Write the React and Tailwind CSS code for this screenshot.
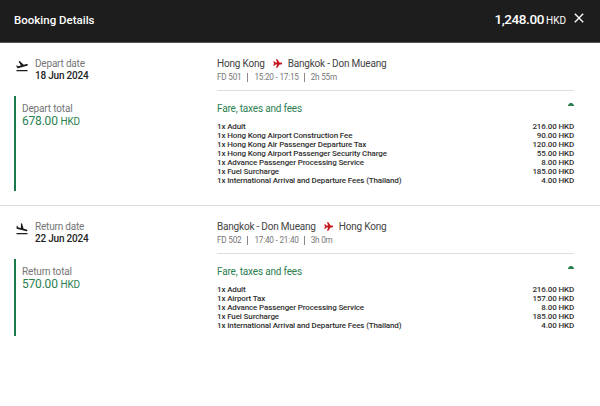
import React from 'react'
import { MdClose, MdFlightLand, MdFlightTakeoff } from 'react-icons/md'

const FLIGHTS = [
  {
    key: 'depart',
    label: 'Depart',
    Icon: MdFlightTakeoff,
    date: '18 Jun 2024',
    total: '678.00',
    from: 'Hong Kong',
    to: 'Bangkok - Don Mueang',
    number: 'FD 501',
    time: '15:20 - 17:15',
    duration: '2h 55m',
    fees: [
      ['Adult', '216.00'],
      ['Hong Kong Airport Construction Fee', '90.00'],
      ['Hong Kong Air Passenger Departure Tax', '120.00'],
      ['Hong Kong Airport Passenger Security Charge', '55.00'],
      ['Advance Passenger Processing Service', '8.00'],
      ['Fuel Surcharge', '185.00'],
      ['International Arrival and Departure Fees (Thailand)', '4.00'],
    ],
  },
  {
    key: 'return',
    label: 'Return',
    Icon: MdFlightLand,
    date: '22 Jun 2024',
    total: '570.00',
    from: 'Bangkok - Don Mueang',
    to: 'Hong Kong',
    number: 'FD 502',
    time: '17:40 - 21:40',
    duration: '3h 0m',
    fees: [
      ['Adult', '216.00'],
      ['Airport Tax', '157.00'],
      ['Advance Passenger Processing Service', '8.00'],
      ['Fuel Surcharge', '185.00'],
      ['International Arrival and Departure Fees (Thailand)', '4.00'],
    ],
  },
]

function PlaneIcon() {
  return (
    <svg className="ml-[8px] mr-[6px] mb-[2px] h-[9px] w-[9px] text-[#c4161c]" viewBox="0 0 18 18" fill="currentColor">
      <path d="M0.5 4.5h2L5 7h3.4L5.8 0.5h3L13 7h3.2a2 2 0 0 1 0 4H13l-4.2 6.5h-3L8.4 11H5l-2.5 2.5h-2L2 9z" />
    </svg>
  )
}

function Flight({ flight }) {
  const { Icon } = flight
  return (
    <section className="border-b border-[#dcdcdc] last:border-b-0 pl-[14px] pr-[26px] pt-[15px] pb-[14px]">
      <div className="flex h-[38px]">
        <div className="flex w-[203px] text-[10px] leading-3 tracking-[-0.2px]">
          <Icon className="mt-[0.5px] ml-[1px] mr-[6px] size-[14px] text-[#1c1c1c]" />
          <div>
            <div className="text-[#757575]">{flight.label} date</div>
            <div className="font-medium text-[#242424]">{flight.date}</div>
          </div>
        </div>

        <div className="h-[33px] flex-1 border-b border-[#dedede]">
          <div className="flex h-3 items-center text-[10px] leading-3 tracking-[-0.2px] text-[#444]">
            <span>{flight.from}</span>
            <PlaneIcon />
            <span>{flight.to}</span>
          </div>
          <div className="mt-[2px] flex h-[10px] items-center text-[8.2px] leading-[10px] tracking-[-0.22px] text-[#777]">
            <span>{flight.number}</span>
            <span className="mx-[6px] h-[9px] w-px bg-[#888]" />
            <span>{flight.time}</span>
            <span className="ml-[5px] mr-[6px] h-[9px] w-px bg-[#888]" />
            <span>{flight.duration}</span>
          </div>
        </div>
      </div>

      <div className="flex">
        <div className="w-[203px] border-l-2 border-[#1b7a4b] pl-[6px] pt-[7px]">
          <div className="text-[10px] leading-3 tracking-[-0.15px] text-[#757575]">{flight.label} total</div>
          <div className="text-[12px] leading-[13px] tracking-[-0.2px] text-[#2b8050]">
            {flight.total} <span className="text-[10px]">HKD</span>
          </div>
        </div>

        <div className="flex-1 pt-[7px] pb-[6px]">
          <div className="flex h-3 items-center justify-between text-[10px] leading-3 tracking-[-0.18px] text-[#2b8050]">
            <span>Fare, taxes and fees</span>
            <svg className="mb-[9px] h-[3px] w-[6px]" viewBox="0 0 6 3" fill="currentColor">
              <path d="M0 3V2L2 0h2l2 2v1z" />
            </svg>
          </div>
          <ul className="mt-[7px] text-[8px] font-medium leading-[9px] tracking-[-0.13px] text-[#303030]">
            {flight.fees.map(([name, amount]) => (
              <li key={name} className="flex justify-between">
                <span>1x {name}</span>
                <span>{amount} HKD</span>
              </li>
            ))}
          </ul>
        </div>
      </div>
    </section>
  )
}

export default function App() {
  return (
    <div className="min-h-screen bg-white font-[Roboto,sans-serif]">
      <header className="flex h-[43px] items-center justify-between border-b border-[#555] bg-[#1d1d1d] pl-[14px] pr-[13px] pb-[2px] text-white">
        <h1 className="mt-[1px] text-[11.5px] font-medium">Booking Details</h1>
        <div className="flex items-center">
          <div className="flex items-baseline gap-[2px] text-[13.5px] font-medium leading-4 tracking-[-0.4px]">
            <span>1,248.00</span>
            <span className="text-[10px] font-normal tracking-normal">HKD</span>
          </div>
          <button aria-label="Close" className="ml-[5px] mb-[4px]">
            <MdClose className="size-[16px]" />
          </button>
        </div>
      </header>

      {FLIGHTS.map(f => <Flight key={f.key} flight={f} />)}
    </div>
  )
}
